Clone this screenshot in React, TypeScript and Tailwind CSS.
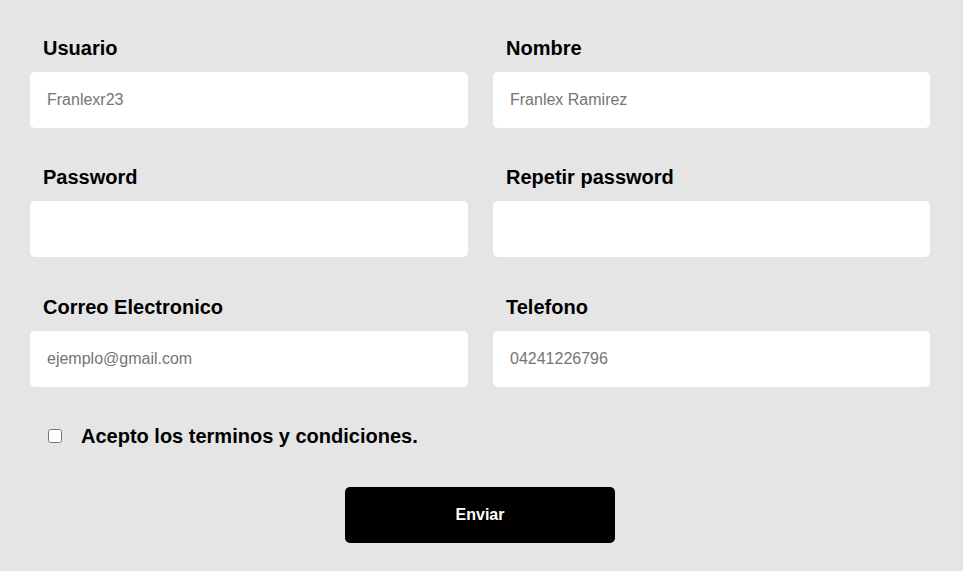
export default function App() {
  const fields = [
    { label: 'Usuario', placeholder: 'Franlexr23', type: 'text' },
    { label: 'Nombre', placeholder: 'Franlex Ramirez', type: 'text' },
    { label: 'Password', placeholder: '', type: 'password' },
    { label: 'Repetir password', placeholder: '', type: 'password' },
    { label: 'Correo Electronico', placeholder: 'ejemplo@gmail.com', type: 'email' },
    { label: 'Telefono', placeholder: '04241226796', type: 'tel' },
  ]

  return (
    <div className="min-h-screen bg-[#e5e5e5] font-['Liberation_Sans',Arial,sans-serif] text-black">
      <form className="w-[900px] ml-[30px] pt-[37px]" onSubmit={(e) => e.preventDefault()}>
        <div className="grid grid-cols-[438px_437px] gap-x-[25px] gap-y-[38.35px]">
          {fields.map((f) => (
            <div key={f.label} className="flex flex-col">
              <label className="pl-[13px] mb-[12px] text-[20px] leading-[23px] font-bold">{f.label}</label>
              <input
                type={f.type}
                placeholder={f.placeholder}
                className="h-[56px] w-full rounded-[5px] bg-white pl-[17px] text-[16px] outline-none placeholder:text-[#757575]"
              />
            </div>
          ))}
        </div>

        <div className="mt-[38px] flex items-center">
          <input type="checkbox" className="ml-[18px] h-[14px] w-[14px]" />
          <span className="ml-[19px] text-[20px] leading-[23px] font-bold">Acepto los terminos y condiciones.</span>
        </div>

        <div className="mt-[39px] flex justify-center">
          <button type="submit" className="h-[56px] w-[270px] rounded-[5px] bg-black pt-px text-[16px] font-bold text-white">
            Enviar
          </button>
        </div>
      </form>
    </div>
  )
}
